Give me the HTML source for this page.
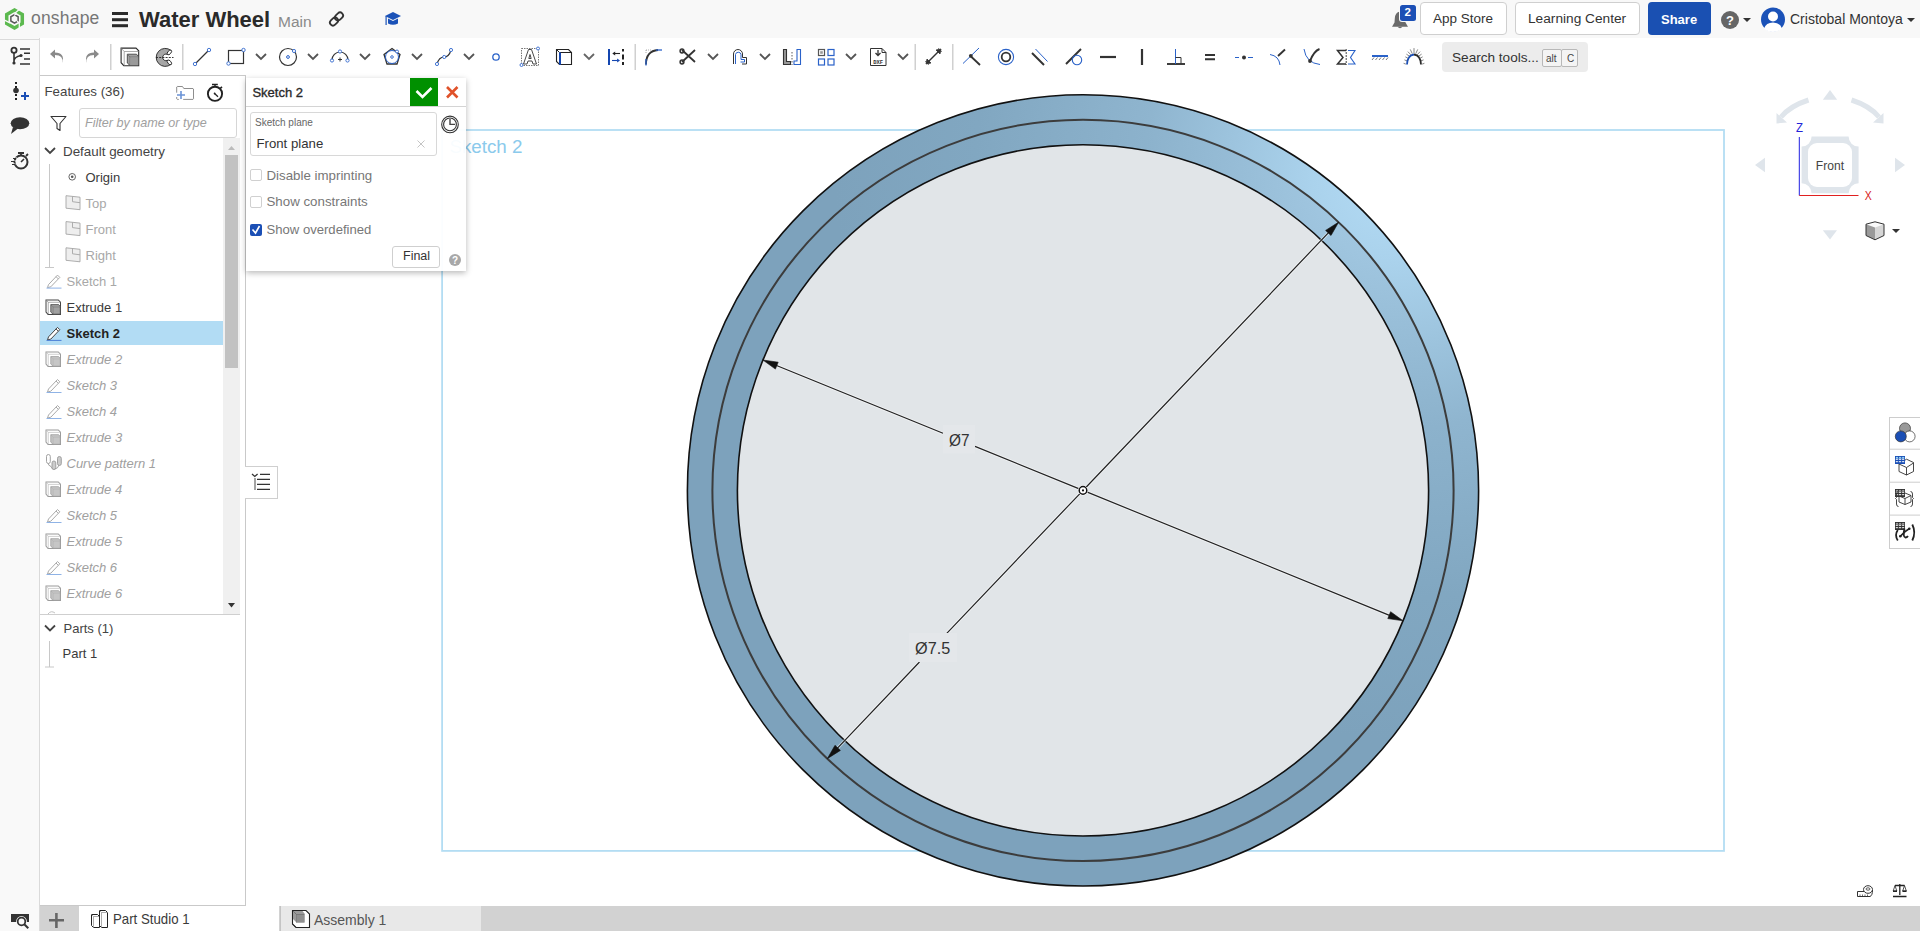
<!DOCTYPE html>
<html><head><meta charset="utf-8">
<style>
*{box-sizing:border-box;margin:0;padding:0}
html,body{width:1920px;height:931px;overflow:hidden;background:#fff;font-family:"Liberation Sans",sans-serif;color:#333;position:relative}
.abs{position:absolute}
#hdr{left:0;top:0;width:1920px;height:38px;background:#f8f8f8}
#lstrip{left:0;top:38px;width:40px;height:893px;background:#f9f9f9;border-right:1px solid #dadada}
#tabs{left:40px;top:906px;width:1880px;height:25px;background:#d2d2d2}
#fp{left:40px;top:75px;width:206px;height:831px;background:#fff;border:1px solid #c9c9c9;border-left:none}
svg{position:absolute;overflow:visible}
.t{position:absolute;white-space:nowrap;line-height:1}
</style></head>
<body>
<div id="hdr" class="abs"></div>
<div id="lstrip" class="abs"></div>
<div class="abs" style="left:0;top:39px;width:39px;height:1px;background:#dadada"></div>
<!-- canvas -->
<svg class="abs" style="left:0;top:0" width="1920" height="931" viewBox="0 0 1920 931">
  <defs>
    <radialGradient id="ringg" gradientUnits="userSpaceOnUse" cx="1395" cy="178" r="560">
      <stop offset="0" stop-color="#b4dcf5"/>
      <stop offset="0.15" stop-color="#aad2ec"/>
      <stop offset="0.45" stop-color="#8fb5cf"/>
      <stop offset="0.75" stop-color="#81a7c1"/>
      <stop offset="1" stop-color="#7da2bc"/>
    </radialGradient>
    <radialGradient id="ringg2" gradientUnits="userSpaceOnUse" cx="1395" cy="178" r="560">
      <stop offset="0" stop-color="#a6cce6"/>
      <stop offset="0.15" stop-color="#9fc5df"/>
      <stop offset="0.45" stop-color="#8cb2cc"/>
      <stop offset="0.75" stop-color="#81a7c1"/>
      <stop offset="1" stop-color="#7da2bc"/>
    </radialGradient>
  </defs>
  <rect x="442.1" y="130" width="1281.9" height="720.9" fill="none" stroke="#b3ddf3" stroke-width="1.8"/>
  <circle cx="1083" cy="490.4" r="395.6" fill="url(#ringg)" stroke="#111" stroke-width="1.6"/>
  <circle cx="1083" cy="490.4" r="370.6" fill="url(#ringg2)" stroke="#3c3c3c" stroke-width="2"/>
  <circle cx="1083" cy="490.4" r="345.6" fill="#e1e5e8" stroke="#111" stroke-width="1.6"/>

  <path d="M775.9,365.2 L943.0,433.3 M975.0,446.4 L1079.3,488.9 M1086.7,491.9 L1390.1,615.6 M837.0,748.6 L919.5,662.0 M946.5,633.6 L1080.2,493.3 M1085.8,487.5 L1329.0,232.2" stroke="#fff" stroke-opacity="0.5" stroke-width="3" fill="none"/>
  <path d="M775.9,365.2 L943.0,433.3 M975.0,446.4 L1079.3,488.9 M1086.7,491.9 L1390.1,615.6 M837.0,748.6 L919.5,662.0 M946.5,633.6 L1080.2,493.3 M1085.8,487.5 L1329.0,232.2" stroke="#222" stroke-width="1.2" fill="none"/>
  <path d="M762.9,360.0 L778.2,362.2 L775.4,369.1 Z M1403.1,620.8 L1387.8,618.6 L1390.6,611.7 Z M827.3,758.7 L835.0,745.3 L840.4,750.4 Z M1338.7,222.1 L1331.0,235.5 L1325.6,230.4 Z" fill="#111" stroke="#111" stroke-width="0.6" stroke-linejoin="round"/>
  <rect x="943" y="425" width="32" height="28.5" fill="#e4e7ea"/>
  <rect x="909" y="633" width="48" height="29" fill="#e4e7ea"/>
  <text x="949" y="446" font-family="Liberation Sans" font-size="17" fill="#333" textLength="20.5" lengthAdjust="spacingAndGlyphs">Ø7</text>
  <text x="915" y="653.8" font-family="Liberation Sans" font-size="17" fill="#333" textLength="35.2" lengthAdjust="spacingAndGlyphs">Ø7.5</text>
  <circle cx="1083" cy="490.4" r="4.6" fill="#fff" stroke="#fff" stroke-width="1"/>
  <circle cx="1083" cy="490.4" r="3.8" fill="none" stroke="#111" stroke-width="1.5"/>
  <circle cx="1083" cy="490.4" r="1.1" fill="#111"/>
</svg>

<div class="t" style="left:449.4px;top:137.7px;font-size:18.8px;color:#8bcaec">Sketch 2</div>
<!-- HEADER -->
<svg style="left:0;top:0" width="1920" height="40">
  <!-- onshape logo -->
  <path d="M14.50,9.90 L22.29,14.40 L22.29,23.40 L14.50,27.90 L6.71,23.40 L6.71,14.40 Z" fill="none" stroke="#5cb94f" stroke-width="3.5" stroke-linejoin="miter"/>
  <path d="M12.5,15.3 L19.5,9.3 M19.3,20.5 V29.5 M3.5,19.6 L10.5,23.2" stroke="#f8f8f8" stroke-width="1.3"/>
  <path d="M14.50,14.70 L18.14,16.80 L18.14,21.00 L14.50,23.10 L10.86,21.00 L10.86,16.80 Z" fill="none" stroke="#5a5a5a" stroke-width="1.5"/>
  <path d="M14.2,15.2 L17,13.5 M17,20.8 L19,23" stroke="#f8f8f8" stroke-width="1.2"/>
  <!-- hamburger -->
  <rect x="112" y="12" width="16" height="3" fill="#2b2b2b"/>
  <rect x="112" y="18.2" width="16" height="3" fill="#2b2b2b"/>
  <rect x="112" y="24.2" width="16" height="3" fill="#2b2b2b"/>
  <!-- link -->
  <g stroke="#333" stroke-width="1.8" fill="none" transform="translate(336.5,19) rotate(-45)">
    <rect x="-8" y="-3" width="9" height="6" rx="3"/>
    <rect x="-1" y="-3" width="9" height="6" rx="3"/>
  </g>
  <!-- grad cap -->
  <g fill="#1b52b8">
    <path d="M385,16 L393,12 L401,16 L393,20 Z"/>
    <path d="M388,18.5 L388,23.5 Q393,26 398,23.5 L398,18.5 L393,21 Z"/>
    <rect x="385.5" y="16" width="1.2" height="9"/>
  </g>
  <!-- bell -->
  <path d="M1400,11.5 Q1395,12.5 1394.8,18.5 L1394.5,22.5 L1392,26.8 H1408 L1405.5,22.5 L1405.2,18.5 Q1405,12.5 1400,11.5 Z" fill="#6a6a6a"/>
  <path d="M1397.5,26.8 Q1400,29.5 1402.5,26.8 Z" fill="#6a6a6a"/>
  <rect x="1399" y="4" width="18" height="18" rx="3" fill="#f8f8f8"/><rect x="1400" y="5" width="16" height="16" rx="2.5" fill="#1b4fb5"/>
  <!-- help -->
  <circle cx="1730" cy="20" r="9" fill="#666"/>
  <path d="M1743,18 L1751,18 L1747,22 Z" fill="#333"/>
  <!-- avatar -->
  <circle cx="1773" cy="19.5" r="12" fill="#1b52b8"/>
  <circle cx="1773" cy="16.5" r="5" fill="#fff"/>
  <path d="M1764,28.5 Q1766,22.5 1773,22.5 Q1780,22.5 1782,28.5 Q1778,32 1773,32 Q1768,32 1764,28.5 Z" fill="#fff"/>
  <path d="M1907,18 L1915,18 L1911,22 Z" fill="#333"/>
</svg>
<div class="t" style="left:31px;top:9.5px;font-size:17.5px;color:#767676;letter-spacing:0.2px">onshape</div>
<div class="t" style="left:139px;top:8.5px;font-size:22px;font-weight:bold;color:#2a2a2a">Water Wheel</div>
<div class="t" style="left:278px;top:14px;font-size:15.5px;color:#8a8a8a">Main</div>
<div class="t" style="left:1404.6px;top:6.8px;font-size:11.5px;font-weight:bold;color:#fff">2</div>
<div class="t" style="left:1420px;top:2px;width:87px;height:33px;border:1px solid #cfcfcf;border-radius:4px;background:#fff"></div>
<div class="t" style="left:1433px;top:12.2px;font-size:13.5px;color:#333">App Store</div>
<div class="t" style="left:1515px;top:2px;width:125px;height:33px;border:1px solid #cfcfcf;border-radius:4px;background:#fff"></div>
<div class="t" style="left:1528px;top:12px;font-size:13.7px;color:#333">Learning Center</div>
<div class="t" style="left:1648px;top:2px;width:63px;height:33px;border-radius:4px;background:#1a50b2"></div>
<div class="t" style="left:1661px;top:12.5px;font-size:13px;font-weight:bold;color:#fff">Share</div>
<div class="t" style="left:1726px;top:13.5px;font-size:13px;font-weight:bold;color:#fff">?</div>
<div class="t" style="left:1790px;top:11.7px;font-size:14px;color:#333">Cristobal Montoya</div>

<!-- TOOLBAR -->
<svg style="left:0;top:38px" width="1920" height="40" viewBox="0 38 1920 40">
 <g fill="none" stroke-linecap="butt">
  <!-- feature list icon -->
  <circle cx="14" cy="50.3" r="2.6" stroke="#333" stroke-width="1.8"/>
  <path d="M14,53 L14,62.5 M14,61 Q14,57 21,55.5" stroke="#333" stroke-width="1.6"/>
  <circle cx="14" cy="63" r="1.6" fill="#333" stroke="none"/>
  <circle cx="21" cy="55.5" r="1.6" fill="#333" stroke="none"/>
  <path d="M20,49 H30 M24,53.3 H30 M24,59 H30 M20,64 H30" stroke="#333" stroke-width="1.6"/>
  <!-- undo / redo -->
  <path d="M62.5,63 Q63.5,55 55,55 L55,58.5 L50,54 L55,49.5 L55,52.5 Q65,52.5 62.5,63 Z" fill="#8a8a8a" stroke="none"/>
  <path d="M86.5,63 Q85.5,55 94,55 L94,58.5 L99,54 L94,49.5 L94,52.5 Q84,52.5 86.5,63 Z" fill="#8a8a8a" stroke="none"/>
  <rect x="110" y="44" width="1.5" height="26" fill="#d0d0d0" stroke="none"/>
  <!-- part studio-like icon -->
  <path d="M121.1,48.1 H136 L138.7,50.8 V65.7 H123.8 L121.1,62.7 Z" stroke="#2a2a2a" stroke-width="1.1" fill="#fff"/>
  <path d="M121.1,48.1 L124.2,51.5 H138.5 M124.2,51.5 V65.5" stroke="#888" stroke-width="0.7" fill="none"/>
  <path d="M127.3,54.2 H136.5 L138.5,56.5 V65.5 H130 L127.3,63 Z" fill="#a0a0a0" stroke="#333" stroke-width="0.8"/>
  <path d="M127.3,54.2 L130,57 H138.5 M130,57 V65.5" stroke="#666" stroke-width="0.7" fill="none"/>
  <path d="M130.2,57.3 H138.3 V65.3 H130.2 Z" fill="#9a9a9a"/>
  <!-- revolve-like -->
  <path d="M171,50.5 A9,9 0 1 0 171,64.3 L167.5,60.3 A3.3,3.3 0 1 1 167.5,54.5 Z" fill="#a6a6a6" stroke="#222" stroke-width="0.9"/>
  <ellipse cx="169.4" cy="52.4" rx="1.6" ry="2.8" transform="rotate(40 169.4 52.4)" fill="#fff" stroke="#222" stroke-width="0.9"/>
  <ellipse cx="169.4" cy="62.4" rx="1.6" ry="2.8" transform="rotate(-40 169.4 62.4)" fill="#fff" stroke="#222" stroke-width="0.9"/>
  <path d="M156,57.5 H173.5" stroke="#222" stroke-width="0.9" stroke-dasharray="2 1.2"/>
  <rect x="182" y="44" width="1.5" height="26" fill="#d0d0d0" stroke="none"/>
  <!-- line -->
  <path d="M195,64 L209,50" stroke="#333" stroke-width="1.3"/>
  <circle cx="195" cy="64" r="1.7" stroke="#3b6fd0" stroke-width="0.95" fill="#fff"/>
  <circle cx="209" cy="50" r="1.7" stroke="#3b6fd0" stroke-width="0.95" fill="#fff"/>
  <!-- rectangle -->
  <rect x="228.5" y="50.5" width="15" height="13" stroke="#333" stroke-width="1.2"/>
  <circle cx="228.5" cy="63.5" r="1.7" stroke="#3b6fd0" stroke-width="0.95" fill="#fff"/>
  <circle cx="243.5" cy="50" r="1.7" stroke="#3b6fd0" stroke-width="0.95" fill="#fff"/>
  <path d="M256,54 L261,59 L266,54" stroke="#555" stroke-width="1.8" fill="none"/>
  <!-- circle -->
  <circle cx="288" cy="57" r="8.5" stroke="#333" stroke-width="1.2"/>
  <circle cx="288" cy="57" r="1.4" stroke="#2a62c9" stroke-width="1"/>
  <circle cx="294" cy="51" r="1.6" stroke="#3b6fd0" stroke-width="0.95" fill="#fff"/>
  <path d="M308,54 L313,59 L318,54" stroke="#555" stroke-width="1.8" fill="none"/>
  <!-- arc -->
  <path d="M332,60 A8,8 0 0 1 348,60" stroke="#333" stroke-width="1.2"/>
  <circle cx="332" cy="60.5" r="1.6" stroke="#3b6fd0" stroke-width="0.95" fill="#fff"/>
  <circle cx="347.5" cy="60.5" r="1.6" stroke="#3b6fd0" stroke-width="0.95" fill="#fff"/>
  <circle cx="340" cy="51.5" r="1.6" stroke="#3b6fd0" stroke-width="0.95" fill="#fff"/>
  <path d="M338,59.5 H342 M340,57.5 V61.5" stroke="#333" stroke-width="1"/>
  <path d="M360,54 L365,59 L370,54" stroke="#555" stroke-width="1.8" fill="none"/>
  <!-- polygon -->
  <path d="M392,48.5 L400,54.5 L397,64 L387,64 L384,54.5 Z" stroke="#333" stroke-width="1.3"/>
  <circle cx="392" cy="57" r="6.5" stroke="#2a62c9" stroke-width="1"/>
  <circle cx="392" cy="57" r="1.3" stroke="#2a62c9" stroke-width="0.9"/>
  <circle cx="397" cy="51.5" r="1.5" stroke="#3b6fd0" stroke-width="0.95" fill="#fff"/>
  <path d="M412,54 L417,59 L422,54" stroke="#555" stroke-width="1.8" fill="none"/>
  <!-- spline -->
  <path d="M437,64 Q439,57 444,57 Q449,57 451,50" stroke="#333" stroke-width="1.2"/>
  <circle cx="437" cy="64" r="1.6" stroke="#3b6fd0" stroke-width="0.95" fill="#fff"/>
  <circle cx="444.2" cy="57" r="1.6" stroke="#3b6fd0" stroke-width="0.95" fill="#fff"/>
  <circle cx="451" cy="50" r="1.6" stroke="#3b6fd0" stroke-width="0.95" fill="#fff"/>
  <path d="M464,54 L469,59 L474,54" stroke="#555" stroke-width="1.8" fill="none"/>
  <!-- point -->
  <circle cx="496" cy="57" r="3.2" stroke="#2a62c9" stroke-width="1.3"/>
  <!-- text A -->
  <rect x="521.5" y="48.5" width="17" height="17" stroke="#555" stroke-width="0.8" stroke-dasharray="1.5 1"/>
  <path d="M523.5,64 L528.5,49.5 L531.5,49.5 L536.5,64 L533,64 L532,61 L528,61 L527,64 Z M528.8,58.5 L531.2,58.5 L530,54.5 Z" stroke="#333" stroke-width="0.9" fill="#fff"/>
  <circle cx="521.5" cy="65" r="1.5" stroke="#3b6fd0" stroke-width="0.95" fill="#fff"/>
  <circle cx="538" cy="48.5" r="1.5" stroke="#3b6fd0" stroke-width="0.95" fill="#fff"/>
  <!-- box -->
  <path d="M556.5,49.5 H568.5 L571.5,52.5 V64.5 H559.5 L556.5,61.5 Z" stroke="#222" stroke-width="1.1" fill="none"/>
  <path d="M556.5,49.5 L559.5,52.5 H571.5" stroke="#222" stroke-width="1" fill="none"/>
  <path d="M560,52.5 V64.8" stroke="#1446b0" stroke-width="2"/>
  <path d="M584,54 L589,59 L594,54" stroke="#666" stroke-width="1.8" fill="none"/>
  <!-- mirror -->
  <path d="M609,49 V65" stroke="#1446b0" stroke-width="2"/>
  <path d="M623,49 V51.5 M623,54.5 V59.5 M623,62 V65" stroke="#222" stroke-width="2"/>
  <path d="M620,53.5 H614" stroke="#222" stroke-width="1.1"/>
  <path d="M612.3,53.5 L615.2,51.6 V55.4 Z" fill="#222"/>
  <path d="M612,60.5 H617.5" stroke="#1446b0" stroke-width="1.1"/>
  <path d="M620,60.5 L617.1,58.6 V62.4 Z" fill="#1446b0"/>
  <rect x="634.5" y="44" width="1.5" height="26" fill="#d0d0d0" stroke="none"/>
  <!-- fillet -->
  <path d="M646,64.5 Q646,51 658,50" stroke="#333" stroke-width="1.8"/>
  <path d="M646,59 V65.5" stroke="#2a62c9" stroke-width="1.3"/>
  <path d="M656,50 H662" stroke="#2a62c9" stroke-width="1.3"/>
  <path d="M646,50 H651 M646,50 V54" stroke="#777" stroke-width="0.6" stroke-dasharray="1 1"/>
  <!-- scissors -->
  <path d="M682,50 L695,62 M695,50 L682,62" stroke="#333" stroke-width="1.8"/>
  <circle cx="682" cy="51" r="1.9" stroke="#333" stroke-width="1.5"/>
  <circle cx="682" cy="62" r="1.9" stroke="#333" stroke-width="1.5"/>
  <path d="M708,54 L713,59 L718,54" stroke="#555" stroke-width="1.8" fill="none"/>
  <!-- offset -->
  <path d="M733.5,64 V54 A4.5,4.5 0 0 1 742.5,54 V57.5 H746.5 V64 H742" stroke="#333" stroke-width="1"/>
  <path d="M735.5,64 V54.5 A2.8,2.8 0 0 1 741,54.5 V59.5 H744.5 V62 H740.5" stroke="#2a62c9" stroke-width="1"/>
  <path d="M760,54 L765,59 L770,54" stroke="#555" stroke-width="1.8" fill="none"/>
  <!-- L|J -->
  <path d="M783.5,49.5 H786.5 V61.5 H790.5 V64.5 H783.5 Z" stroke="#333" stroke-width="1.1" fill="#999"/>
  <path d="M792,52 V65" stroke="#333" stroke-width="0.8" stroke-dasharray="1.5 1.5"/>
  <path d="M797,49.5 H800.5 V64.5 H794 V61 H797 Z" stroke="#2a62c9" stroke-width="1.1"/>
  <!-- grid -->
  <rect x="818.5" y="49.5" width="6" height="6" stroke="#555" stroke-width="1.2"/>
  <rect x="820.2" y="51.2" width="2.6" height="2.6" fill="#999" stroke="none"/>
  <rect x="828" y="49.5" width="6" height="6" stroke="#2a62c9" stroke-width="1.2"/>
  <rect x="818.5" y="59" width="6" height="6" stroke="#2a62c9" stroke-width="1.2"/>
  <rect x="828" y="59" width="6" height="6" stroke="#2a62c9" stroke-width="1.2"/>
  <path d="M846,54 L851,59 L856,54" stroke="#555" stroke-width="1.8" fill="none"/>
  <!-- DXF -->
  <path d="M870.5,48.5 H882 L886,52.5 V65.5 H870.5 Z M882,48.5 V52.5 H886" stroke="#333" stroke-width="1"/>
  <path d="M878,50 V55 M875.5,53 L878,55.5 L880.5,53" stroke="#333" stroke-width="1.3"/>
  <text x="878.2" y="63.6" font-family="Liberation Mono" font-size="5.5" font-weight="bold" fill="#333" text-anchor="middle">DXF</text>
  <path d="M898,54 L903,59 L908,54" stroke="#555" stroke-width="1.8" fill="none"/>
  <rect x="914.5" y="44" width="1.5" height="26" fill="#d0d0d0" stroke="none"/>
  <!-- dimension -->
  <path d="M928,62 L939,51" stroke="#333" stroke-width="1.5"/>
  <path d="M926,64 L927,59 L931,63 Z M941,49 L940,54 L936,50 Z" fill="#333" stroke="#333" stroke-width="0.8"/>
  <path d="M925,61 L929,65 M938,48 L942,52" stroke="#333" stroke-width="0.6"/>
  <rect x="952" y="44" width="1.5" height="26" fill="#d0d0d0" stroke="none"/>
  <!-- coincident -->
  <path d="M963,63.5 L979,48" stroke="#2a62c9" stroke-width="1"/>
  <path d="M970.5,56 L980,65" stroke="#333" stroke-width="1.8"/>
  <circle cx="970.8" cy="55.8" r="1.9" fill="#333" stroke="none"/>
  <!-- concentric -->
  <circle cx="1006" cy="57" r="7.6" stroke="#2a62c9" stroke-width="1.1"/>
  <circle cx="1006" cy="57" r="4.3" stroke="#333" stroke-width="1.8"/>
  <!-- parallel -->
  <path d="M1032,53 L1044,65" stroke="#333" stroke-width="1.9"/>
  <path d="M1035.5,49 L1047.5,61.5" stroke="#2a62c9" stroke-width="1"/>
  <!-- tangent -->
  <path d="M1066,64 L1081,49" stroke="#333" stroke-width="1.9"/>
  <circle cx="1077" cy="60" r="4.7" stroke="#2a62c9" stroke-width="1.1"/>
  <!-- horizontal / vertical -->
  <path d="M1100,57 H1116" stroke="#333" stroke-width="2.2"/>
  <path d="M1142,49 V65" stroke="#333" stroke-width="2.2"/>
  <!-- perpendicular -->
  <path d="M1167,64 H1185" stroke="#333" stroke-width="1.9"/>
  <path d="M1175.5,49 V64" stroke="#2a62c9" stroke-width="1"/>
  <path d="M1175.5,57.5 H1181 V64" stroke="#333" stroke-width="1"/>
  <!-- equal -->
  <path d="M1205,55 H1215 M1205,59.3 H1215" stroke="#333" stroke-width="1.9"/>
  <!-- midpoint -->
  <path d="M1235,57.5 H1239 M1248,57.5 H1253" stroke="#2a62c9" stroke-width="1.1"/>
  <circle cx="1244" cy="57.5" r="2" fill="#333" stroke="none"/>
  <!-- normal -->
  <path d="M1270,54.5 Q1279,56 1280,65" stroke="#2a62c9" stroke-width="1"/>
  <path d="M1278,56 L1285,49.5" stroke="#333" stroke-width="1.9"/>
  <!-- pierce -->
  <path d="M1304,49 Q1306,63 1320,64.5" stroke="#2a62c9" stroke-width="1"/>
  <path d="M1310,61 Q1314,51 1319.5,49" stroke="#333" stroke-width="1.9"/>
  <circle cx="1310" cy="61" r="1.9" fill="#333" stroke="none"/>
  <!-- symmetric -->
  <path d="M1346,50.5 H1337.5 L1343,57.5 L1337.5,64 H1346" stroke="#333" stroke-width="1.5"/>
  <path d="M1346.2,49 V65" stroke="#333" stroke-width="0.9" stroke-dasharray="2 1"/>
  <path d="M1348,50.5 H1355 L1350.5,57.5 L1355,64 H1348" stroke="#2a62c9" stroke-width="1.1"/>
  <!-- fix -->
  <path d="M1372,56 H1388" stroke="#2a62c9" stroke-width="2"/>
  <path d="M1372,60 L1374,57.5 M1375.5,60 L1377.5,57.5 M1379,60 L1381,57.5 M1382.5,60 L1384.5,57.5 M1386,60 L1388,57.5" stroke="#555" stroke-width="0.8"/>
  <!-- curvature -->
  <path d="M1405.87,64.10 L1403.60,63.31 M1407.06,60.98 L1404.42,59.87 M1408.27,58.39 L1405.32,56.84 M1409.52,56.31 L1406.40,54.13 M1410.84,54.74 L1407.90,51.65 M1412.32,53.69 L1410.28,49.42 M1414.00,53.30 L1414.00,48.10 M1415.68,53.69 L1417.72,49.42 M1417.16,54.74 L1420.10,51.65 M1418.48,56.31 L1421.60,54.13 M1419.73,58.39 L1422.68,56.84 M1420.94,60.98 L1423.58,59.87 M1422.13,64.10 L1424.40,63.31" stroke="#7a7a7a" stroke-width="0.9"/>
  <path d="M1407,64.5 Q1407.5,55 1414,54.5" stroke="#1b4fb5" stroke-width="1.8"/>
  <path d="M1414,54.5 Q1420.5,55 1421,64.5" stroke="#2a2a2a" stroke-width="1.8"/>
 </g>
</svg>
<div class="t" style="left:1442px;top:42px;width:146px;height:30px;background:#ececec;border-radius:4px"></div>
<div class="t" style="left:1452px;top:50.5px;font-size:13.6px;color:#333">Search tools...</div>
<div class="t" style="left:1542px;top:49px;width:20px;height:18px;border:1px solid #b8b8b8;border-radius:2px;background:#f4f4f4;font-size:10px;color:#444;padding:4px 0 0 3px">alt</div>
<div class="t" style="left:1561px;top:49px;width:17px;height:18px;border:1px solid #b8b8b8;border-radius:2px;background:#f4f4f4;font-size:10px;color:#444;padding:4px 0 0 5px">C</div>
<div id="fp" class="abs"></div>

<!-- FEATURE PANEL -->
<div class="t" style="left:40px;top:321px;width:183px;height:24px;background:#b2dcf4"></div>
<div class="t" style="left:223px;top:138px;width:17px;height:476px;background:#f0f0f0"></div>
<div class="t" style="left:225px;top:155px;width:13px;height:213px;background:#c2c2c2"></div>
<div class="t" style="left:79px;top:108px;width:158px;height:30px;border:1px solid #d6d6d6;border-radius:3px;background:#fff"></div>
<div class="t" style="left:40px;top:614px;width:200px;height:1px;background:#cfcfcf"></div>
<svg style="left:0;top:0" width="260" height="700" viewBox="0 0 260 700">
  <!-- scroll arrows -->
  <path d="M228,150 L235,150 L231.5,146 Z" fill="#bbb"/>
  <path d="M228,603 L235,603 L231.5,607.5 Z" fill="#333"/>
  <!-- folder plus -->
  <path d="M176.7,92.7 V87 L177.3,86.5 H182.5 L183.8,88.5 H193 L193.5,89 V98.8 L193,99.4 H183.2 M178.8,99.4 H177.3 L176.7,98.8 V97" stroke="#888" stroke-width="0.95" fill="none"/>
  <path d="M181,91 V99 M177,95 H185" stroke="#6b93d6" stroke-width="1.6"/>
  <!-- stopwatch -->
  <circle cx="215" cy="93.8" r="7.1" stroke="#222" stroke-width="1.9" fill="none"/>
  <path d="M212,84.5 H217.8 M215,84.5 V87" stroke="#222" stroke-width="1.4"/>
  <path d="M220.3,88.3 L222,86.8" stroke="#222" stroke-width="1.6"/>
  <path d="M214.3,93.2 L218,96.8" stroke="#222" stroke-width="1.2"/>
  <circle cx="214.6" cy="93.5" r="0.9" fill="#222"/>
  <!-- filter -->
  <path d="M51,116.5 H66 L60,123.5 V130.5 L57,128.5 V123.5 Z" stroke="#333" stroke-width="1.1" fill="none" stroke-linejoin="round"/>
  <!-- chevrons -->
  <path d="M45,148 L50,153 L55,148" stroke="#444" stroke-width="1.8" fill="none"/>
  <path d="M45,625.5 L50,630.5 L55,625.5" stroke="#444" stroke-width="1.8" fill="none"/>
  <!-- tree lines -->
  <path d="M49.5,164 V267.5 M45,267.5 H54" stroke="#c8c8c8" stroke-width="1"/>
  <path d="M49.5,641 V667 M45,667 H54" stroke="#c8c8c8" stroke-width="1"/>
  <!-- origin -->
  <circle cx="72.2" cy="176.8" r="3.3" stroke="#555" stroke-width="0.9" fill="none"/>
  <circle cx="72.2" cy="176.8" r="1.3" fill="#555"/>
  <!-- partial icon at bottom -->
  <path d="M48,614 Q51,610 55,613" stroke="#bbb" stroke-width="0.9" fill="none"/>
  <g transform="translate(46,272.6)"><path d="M2.5,12 L11.5,2.5 L13.8,4.8 L4.8,14.2 L1.5,15 Z M10,4 L12.3,6.3" stroke="#aaa" stroke-width="1" fill="#fff" stroke-linejoin="round"/><path d="M0.5,15.5 H15.5" stroke="#8fb3e6" stroke-width="1"/></g><g transform="translate(45.5,299.4) scale(0.852)"><path d="M0.6,0.6 H15 L17.6,3.2 V17.6 H3 L0.6,14.8 Z" stroke="#444" stroke-width="1.2" fill="#fff"/><path d="M0.6,0.6 L3.2,3.4 H17.4 M3.2,3.4 V17.4" stroke="#888" stroke-width="0.8" fill="none"/><path d="M6.2,6.1 H15.4 L17.4,8.4 V17.4 H8.9 L6.2,14.9 Z" fill="#a0a0a0" stroke="#444" stroke-width="0.9"/><path d="M6.2,6.1 L8.9,8.9 H17.4 M8.9,8.9 V17.4" stroke="#444" stroke-width="0.6" fill="none" opacity="0.6"/></g><g transform="translate(46,324.9)"><path d="M2.5,12 L11.5,2.5 L13.8,4.8 L4.8,14.2 L1.5,15 Z M10,4 L12.3,6.3" stroke="#444" stroke-width="1" fill="#fff" stroke-linejoin="round"/><path d="M0.5,15.5 H15.5" stroke="#4a7fd6" stroke-width="1"/></g><g transform="translate(45.5,351.4) scale(0.852)"><path d="M0.6,0.6 H15 L17.6,3.2 V17.6 H3 L0.6,14.8 Z" stroke="#9a9a9a" stroke-width="1.2" fill="#fff"/><path d="M0.6,0.6 L3.2,3.4 H17.4 M3.2,3.4 V17.4" stroke="#bbb" stroke-width="0.8" fill="none"/><path d="M6.2,6.1 H15.4 L17.4,8.4 V17.4 H8.9 L6.2,14.9 Z" fill="#c6c6c6" stroke="#9a9a9a" stroke-width="0.9"/><path d="M6.2,6.1 L8.9,8.9 H17.4 M8.9,8.9 V17.4" stroke="#9a9a9a" stroke-width="0.6" fill="none" opacity="0.6"/></g><g transform="translate(46,377)"><path d="M2.5,12 L11.5,2.5 L13.8,4.8 L4.8,14.2 L1.5,15 Z M10,4 L12.3,6.3" stroke="#aaa" stroke-width="1" fill="#fff" stroke-linejoin="round"/><path d="M0.5,15.5 H15.5" stroke="#8fb3e6" stroke-width="1"/></g><g transform="translate(46,403)"><path d="M2.5,12 L11.5,2.5 L13.8,4.8 L4.8,14.2 L1.5,15 Z M10,4 L12.3,6.3" stroke="#aaa" stroke-width="1" fill="#fff" stroke-linejoin="round"/><path d="M0.5,15.5 H15.5" stroke="#8fb3e6" stroke-width="1"/></g><g transform="translate(45.5,429.5) scale(0.852)"><path d="M0.6,0.6 H15 L17.6,3.2 V17.6 H3 L0.6,14.8 Z" stroke="#9a9a9a" stroke-width="1.2" fill="#fff"/><path d="M0.6,0.6 L3.2,3.4 H17.4 M3.2,3.4 V17.4" stroke="#bbb" stroke-width="0.8" fill="none"/><path d="M6.2,6.1 H15.4 L17.4,8.4 V17.4 H8.9 L6.2,14.9 Z" fill="#c6c6c6" stroke="#9a9a9a" stroke-width="0.9"/><path d="M6.2,6.1 L8.9,8.9 H17.4 M8.9,8.9 V17.4" stroke="#9a9a9a" stroke-width="0.6" fill="none" opacity="0.6"/></g><g transform="translate(46,450)" stroke="#999" stroke-width="0.9" fill="#fff"><path d="M2,12 Q2,16 5,16.5 Q6,20 9,19 Q12,18.5 13,15" fill="none"/><rect x="0.5" y="4.5" width="3.8" height="9" rx="1.9"/><rect x="6" y="11" width="3.8" height="8.5" rx="1.9" fill="#ccc"/><rect x="11.5" y="6.5" width="3.8" height="9" rx="1.9" fill="#ccc"/></g><g transform="translate(45.5,481.5) scale(0.852)"><path d="M0.6,0.6 H15 L17.6,3.2 V17.6 H3 L0.6,14.8 Z" stroke="#9a9a9a" stroke-width="1.2" fill="#fff"/><path d="M0.6,0.6 L3.2,3.4 H17.4 M3.2,3.4 V17.4" stroke="#bbb" stroke-width="0.8" fill="none"/><path d="M6.2,6.1 H15.4 L17.4,8.4 V17.4 H8.9 L6.2,14.9 Z" fill="#c6c6c6" stroke="#9a9a9a" stroke-width="0.9"/><path d="M6.2,6.1 L8.9,8.9 H17.4 M8.9,8.9 V17.4" stroke="#9a9a9a" stroke-width="0.6" fill="none" opacity="0.6"/></g><g transform="translate(46,507)"><path d="M2.5,12 L11.5,2.5 L13.8,4.8 L4.8,14.2 L1.5,15 Z M10,4 L12.3,6.3" stroke="#aaa" stroke-width="1" fill="#fff" stroke-linejoin="round"/><path d="M0.5,15.5 H15.5" stroke="#8fb3e6" stroke-width="1"/></g><g transform="translate(45.5,533.5) scale(0.852)"><path d="M0.6,0.6 H15 L17.6,3.2 V17.6 H3 L0.6,14.8 Z" stroke="#9a9a9a" stroke-width="1.2" fill="#fff"/><path d="M0.6,0.6 L3.2,3.4 H17.4 M3.2,3.4 V17.4" stroke="#bbb" stroke-width="0.8" fill="none"/><path d="M6.2,6.1 H15.4 L17.4,8.4 V17.4 H8.9 L6.2,14.9 Z" fill="#c6c6c6" stroke="#9a9a9a" stroke-width="0.9"/><path d="M6.2,6.1 L8.9,8.9 H17.4 M8.9,8.9 V17.4" stroke="#9a9a9a" stroke-width="0.6" fill="none" opacity="0.6"/></g><g transform="translate(46,559)"><path d="M2.5,12 L11.5,2.5 L13.8,4.8 L4.8,14.2 L1.5,15 Z M10,4 L12.3,6.3" stroke="#aaa" stroke-width="1" fill="#fff" stroke-linejoin="round"/><path d="M0.5,15.5 H15.5" stroke="#8fb3e6" stroke-width="1"/></g><g transform="translate(45.5,585.5) scale(0.852)"><path d="M0.6,0.6 H15 L17.6,3.2 V17.6 H3 L0.6,14.8 Z" stroke="#9a9a9a" stroke-width="1.2" fill="#fff"/><path d="M0.6,0.6 L3.2,3.4 H17.4 M3.2,3.4 V17.4" stroke="#bbb" stroke-width="0.8" fill="none"/><path d="M6.2,6.1 H15.4 L17.4,8.4 V17.4 H8.9 L6.2,14.9 Z" fill="#c6c6c6" stroke="#9a9a9a" stroke-width="0.9"/><path d="M6.2,6.1 L8.9,8.9 H17.4 M8.9,8.9 V17.4" stroke="#9a9a9a" stroke-width="0.6" fill="none" opacity="0.6"/></g><g transform="translate(65.5,195.2)" stroke="#a5a5a5" stroke-width="0.9" fill="#eee"><path d="M0.5,0.5 L14.5,2 L14.5,14.5 L0.5,13 Z"/><path d="M7,1.2 V6.5 L14.5,7.5" fill="none"/></g><g transform="translate(65.5,221.1)" stroke="#a5a5a5" stroke-width="0.9" fill="#eee"><path d="M0.5,0.5 L14.5,2 L14.5,14.5 L0.5,13 Z"/><path d="M7,1.2 V6.5 L14.5,7.5" fill="none"/></g><g transform="translate(65.5,247.3)" stroke="#a5a5a5" stroke-width="0.9" fill="#eee"><path d="M0.5,0.5 L14.5,2 L14.5,14.5 L0.5,13 Z"/><path d="M7,1.2 V6.5 L14.5,7.5" fill="none"/></g>
</svg>
<div class="t" style="left:44.5px;top:84.9px;font-size:13.3px;color:#444">Features (36)</div>
<div class="t" style="left:85px;top:116.7px;font-size:12.6px;color:#a0a0a0;font-style:italic">Filter by name or type</div>
<div class="t" style="left:63px;top:144.7px;font-size:13.4px;color:#444">Default geometry</div>
<div class="t" style="left:85.5px;top:171.0px;font-size:13px;color:#3a3a3a">Origin</div>
<div class="t" style="left:63.5px;top:621.7px;font-size:13px;color:#444">Parts (1)</div>
<div class="t" style="left:62.5px;top:647.3px;font-size:13px;color:#3a3a3a">Part 1</div>
<div class="t" style="left:66.5px;top:274.6px;font-size:13px;color:#a8a8a8">Sketch 1</div><div class="t" style="left:66.5px;top:300.9px;font-size:13px;color:#3a3a3a">Extrude 1</div><div class="t" style="left:66.5px;top:326.9px;font-size:13px;color:#222;font-weight:bold">Sketch 2</div><div class="t" style="left:66.5px;top:352.9px;font-size:13px;color:#a0a0a0;font-style:italic">Extrude 2</div><div class="t" style="left:66.5px;top:379.0px;font-size:13px;color:#a0a0a0;font-style:italic">Sketch 3</div><div class="t" style="left:66.5px;top:405.0px;font-size:13px;color:#a0a0a0;font-style:italic">Sketch 4</div><div class="t" style="left:66.5px;top:431.0px;font-size:13px;color:#a0a0a0;font-style:italic">Extrude 3</div><div class="t" style="left:66.5px;top:457.0px;font-size:13px;color:#a0a0a0;font-style:italic">Curve pattern 1</div><div class="t" style="left:66.5px;top:483.0px;font-size:13px;color:#a0a0a0;font-style:italic">Extrude 4</div><div class="t" style="left:66.5px;top:509.0px;font-size:13px;color:#a0a0a0;font-style:italic">Sketch 5</div><div class="t" style="left:66.5px;top:535.0px;font-size:13px;color:#a0a0a0;font-style:italic">Extrude 5</div><div class="t" style="left:66.5px;top:561.0px;font-size:13px;color:#a0a0a0;font-style:italic">Sketch 6</div><div class="t" style="left:66.5px;top:587.0px;font-size:13px;color:#a0a0a0;font-style:italic">Extrude 6</div><div class="t" style="left:85.5px;top:196.7px;font-size:13px;color:#a8a8a8">Top</div><div class="t" style="left:85.5px;top:222.6px;font-size:13px;color:#a8a8a8">Front</div><div class="t" style="left:85.5px;top:248.8px;font-size:13px;color:#a8a8a8">Right</div>
<div id="tabs" class="abs"></div>



<!-- PANEL TOGGLE TAB -->
<div class="t" style="left:245px;top:465.5px;width:33px;height:33px;background:#fff;border:1px solid #cfcfcf;border-left:none"></div>
<svg style="left:240px;top:460px" width="50" height="45" viewBox="240 460 50 45">
  <path d="M252,474 L254.8,476.5 L257.6,474" stroke="#333" stroke-width="1.3" fill="none"/>
  <path d="M260,474.4 H270 M257,479.4 H270 M257,484.4 H270 M257,489.4 H270" stroke="#333" stroke-width="1.1"/>
  <path d="M255,478 V490" stroke="#999" stroke-width="1.8"/>
</svg>
<!-- VIEW CUBE -->
<svg style="left:1740px;top:80px" width="180" height="170" viewBox="1740 80 180 170">
  <path d="M1801.6,146.6 A10,10 0 0 0 1811.6,136.6 H1848.6 A10,10 0 0 0 1858.6,146.6 V183.3 A10,10 0 0 0 1848.6,193.3 H1811.6 A10,10 0 0 0 1801.6,183.3 Z" fill="#dfe5eb"/>
  <rect x="1808" y="143" width="44" height="44" rx="9" fill="#fff"/>
  <path d="M1830,90 L1837.2,99.8 L1822.8,99.8 Z" fill="#dfe5eb"/>
  <path d="M1830,239.6 L1837,230.3 L1822.8,230.3 Z" fill="#dfe5eb"/>
  <path d="M1755,165 L1765,157.8 L1765,172.2 Z" fill="#dfe5eb"/>
  <path d="M1905,165 L1895,157.8 L1895,172.2 Z" fill="#dfe5eb"/>
  <path d="M1808.5,100 Q1790,106 1781,117" stroke="#dfe5eb" stroke-width="5" fill="none"/>
  <path d="M1776.5,113 L1776.5,123.5 L1787,122.5 Z" fill="#dfe5eb"/>
  <path d="M1851.5,100 Q1870,106 1879,117" stroke="#dfe5eb" stroke-width="5" fill="none"/>
  <path d="M1883.5,113 L1883.5,123.5 L1873,122.5 Z" fill="#dfe5eb"/>
  <path d="M1799.3,137 V195.5" stroke="#2020e0" stroke-width="1"/>
  <path d="M1799.3,195.5 H1858.5" stroke="#e02020" stroke-width="1"/>
  <text x="1796" y="132" font-family="Liberation Sans" font-size="12" fill="#2323d8" textLength="7" lengthAdjust="spacingAndGlyphs">Z</text>
  <text x="1864.8" y="200.3" font-family="Liberation Sans" font-size="12" fill="#d82323" textLength="7" lengthAdjust="spacingAndGlyphs">X</text>
  <text x="1815.8" y="170.1" font-family="Liberation Sans" font-size="13" fill="#444" textLength="28.2" lengthAdjust="spacingAndGlyphs">Front</text>
  <!-- small cube -->
  <path d="M1866,224.2 L1875,221.8 L1884,224.2 L1875,227.5 Z" fill="#fafafa"/>
  <path d="M1866,224.2 L1875,227.5 L1875,239.8 L1866,235.5 Z" fill="#9a9a9a"/>
  <path d="M1884,224.2 L1875,227.5 L1875,239.8 L1884,235.5 Z" fill="#d6d6d6"/>
  <path d="M1866,224.2 L1875,221.8 L1884,224.2 L1884,235.5 L1875,239.8 L1866,235.5 Z" stroke="#333" stroke-width="1" fill="none" stroke-linejoin="round"/>
  <path d="M1892,229 H1900 L1896,233 Z" fill="#333"/>
</svg>
<!-- RIGHT PANEL -->
<div class="t" style="left:1888.5px;top:416.5px;width:40px;height:132px;background:#fff;border:1px solid #cdcdcd;border-right:none"></div>
<svg style="left:1880px;top:410px" width="40" height="145" viewBox="1880 410 40 145">
  <path d="M1889,449.2 H1920 M1889,482.2 H1920 M1889,515.1 H1920" stroke="#cdcdcd" stroke-width="1"/>
  <circle cx="1905" cy="428.4" r="5.5" fill="#999" stroke="#333" stroke-width="0.7"/>
  <circle cx="1909.6" cy="436.4" r="5.5" fill="#fff" stroke="#333" stroke-width="0.7"/>
  <circle cx="1900.8" cy="436.4" r="5.5" fill="#1b4fb5" stroke="#333" stroke-width="0.7"/>
  <!-- icon 2 -->
  <path d="M1899,464 L1906.5,459.2 L1913.5,462.5 V471.5 L1906.5,475 L1899,471.5 Z M1899,464 L1906.5,467.5 L1913.5,463 M1906.5,467.5 V475" stroke="#333" stroke-width="0.9" fill="#fff"/>
  <rect x="1895" y="456" width="10" height="8" fill="#1b4fb5"/><rect x="1895.9" y="456.9" width="2.2" height="1.6" fill="#8fd0f5"/><rect x="1899.0" y="456.9" width="2.2" height="1.6" fill="#8fd0f5"/><rect x="1902.1" y="456.9" width="2.2" height="1.6" fill="#8fd0f5"/><path d="M1895.8,459.3 H1904.2 M1895.8,461.7 H1904.2" stroke="#fff" stroke-width="1"/><path d="M1898.4,459 V463.2 M1901.6,459 V463.2" stroke="#1b4fb5" stroke-width="0.9"/>
  <!-- icon 3 -->
  <path d="M1899,496 L1905,493 L1911,495.5 V502 L1905,504.5 L1899,502 Z M1899,496 L1905,498.5 L1911,495.5 M1905,498.5 V504.5" stroke="#333" stroke-width="0.9" fill="#fff"/>
  <rect x="1895" y="489" width="10" height="8" fill="#333"/><rect x="1895.9" y="489.9" width="2.2" height="1.6" fill="#999"/><rect x="1899.0" y="489.9" width="2.2" height="1.6" fill="#999"/><rect x="1902.1" y="489.9" width="2.2" height="1.6" fill="#999"/><path d="M1895.8,492.3 H1904.2 M1895.8,494.7 H1904.2" stroke="#fff" stroke-width="1"/><path d="M1898.4,492 V496.2 M1901.6,492 V496.2" stroke="#333" stroke-width="0.9"/>
  <path d="M1898.5,491.5 Q1896.5,491.5 1896.5,494 V497.5 L1895.5,498.5 L1896.5,499.5 V504 Q1896.5,506.5 1898.5,506.5 M1910.5,491.5 Q1912.5,491.5 1912.5,494 V497.5 L1913.5,498.5 L1912.5,499.5 V504 Q1912.5,506.5 1910.5,506.5" stroke="#333" stroke-width="0.9" fill="none"/>
  <!-- icon 4 -->
  <rect x="1895" y="522" width="10" height="8" fill="#333"/><rect x="1895.9" y="522.9" width="2.2" height="1.6" fill="#999"/><rect x="1899.0" y="522.9" width="2.2" height="1.6" fill="#999"/><rect x="1902.1" y="522.9" width="2.2" height="1.6" fill="#999"/><path d="M1895.8,525.3 H1904.2 M1895.8,527.7 H1904.2" stroke="#fff" stroke-width="1"/><path d="M1898.4,525 V529.2 M1901.6,525 V529.2" stroke="#333" stroke-width="0.9"/>
  <path d="M1897.8,530 Q1894.3,535 1897.8,540.5" stroke="#222" stroke-width="1.8" fill="none"/>
  <path d="M1912.3,524.5 Q1916.2,532.5 1912.3,540.5" stroke="#222" stroke-width="1.8" fill="none"/>
  <path d="M1904.5,528.5 Q1902.5,537 1905.5,537.5 Q1907,537.5 1908,536" stroke="#222" stroke-width="1.8" fill="none"/>
  <path d="M1900,536.5 Q1905,531 1909.5,528.5" stroke="#222" stroke-width="1.6" fill="none"/>
  <circle cx="1900.3" cy="536.3" r="1.3" fill="#222"/>
  <circle cx="1909.3" cy="528.8" r="1.3" fill="#222"/>
</svg>
<!-- BOTTOM RIGHT ICONS -->
<svg style="left:1850px;top:878px" width="70" height="25" viewBox="1850 878 70 25">
  <ellipse cx="1868" cy="889.5" rx="4.5" ry="3.8" stroke="#333" stroke-width="1" fill="#fff"/>
  <ellipse cx="1868" cy="889" rx="2" ry="1.2" stroke="#333" stroke-width="0.8" fill="none"/>
  <path d="M1857.5,891.5 H1864 M1857.5,891.5 V896.5 H1870 Q1872.5,895.5 1872.5,890" stroke="#333" stroke-width="1" fill="none"/>
  <path d="M1860,896 V894.5 M1862.5,896 V894.5 M1865,896 V894.5 M1867.5,896 V894.5" stroke="#333" stroke-width="0.7"/>
  <path d="M1899.8,884 V895 M1895,885.5 H1904.5 M1893,896.5 H1906.5" stroke="#222" stroke-width="1.3"/>
  <path d="M1895,885.5 L1893.2,891 H1896.8 Z M1904.5,885.5 L1902.7,891 H1906.3 Z" stroke="#222" stroke-width="0.8" fill="none"/>
  <path d="M1893,891.2 H1897 M1902.5,891.2 H1906.5" stroke="#222" stroke-width="1.5"/>
</svg>
<!-- SKETCH DIALOG -->
<div class="t" style="left:246px;top:78px;width:220px;height:193px;background:rgba(255,255,255,0.94);box-shadow:0 2px 6px rgba(0,0,0,0.28)"></div>
<div class="t" style="left:246px;top:106px;width:220px;height:1px;background:#d4d4d4"></div>
<div class="t" style="left:410px;top:78px;width:28px;height:28px;background:#009000"></div>
<div class="t" style="left:249.5px;top:112px;width:187px;height:44px;border:1px solid #d8d8d8;border-radius:3px;background:#fff"></div>
<div class="t" style="left:391.5px;top:246px;width:48.5px;height:21.5px;border:1px solid #cfcfcf;border-radius:3px;background:#fff"></div>
<div class="t" style="left:250px;top:169.3px;width:12px;height:12px;border:1px solid #d0d0d0;border-radius:2px;background:#fff"></div>
<div class="t" style="left:250px;top:196px;width:12px;height:12px;border:1px solid #d0d0d0;border-radius:2px;background:#fff"></div>
<div class="t" style="left:250px;top:223.5px;width:12px;height:12px;border-radius:2px;background:#1b4fb5"></div>
<svg style="left:240px;top:70px" width="240" height="210" viewBox="240 70 240 210">
  <path d="M416.5,91 L422.5,97 L431.5,88" stroke="#fff" stroke-width="2.6" fill="none"/>
  <path d="M447,87 L457.5,97.5 M457.5,87 L447,97.5" stroke="#e0522a" stroke-width="2.6"/>
  <path d="M417.5,140.5 L424.5,147.5 M424.5,140.5 L417.5,147.5" stroke="#c4c4c4" stroke-width="1"/>
  <circle cx="450" cy="124.4" r="8.3" stroke="#333" stroke-width="1.1" fill="none"/>
  <circle cx="450" cy="124.4" r="6.4" stroke="#333" stroke-width="1.1" fill="none"/>
  <path d="M450,119 V124.4 H455" stroke="#444" stroke-width="1.4" fill="none"/>
  <path d="M252.5,229.5 L255.5,233 L259.5,226" stroke="#fff" stroke-width="1.6" fill="none"/>
  <circle cx="455" cy="260" r="6" fill="#a8a8a8"/>
  <text x="455" y="263.8" font-family="Liberation Sans" font-size="10" font-weight="bold" fill="#fff" text-anchor="middle">?</text>
</svg>
<div class="t" style="left:252.4px;top:85.6px;font-size:13px;color:#2a2a2a;-webkit-text-stroke:0.35px #2a2a2a">Sketch 2</div>
<div class="t" style="left:255px;top:118.4px;font-size:10px;color:#666">Sketch plane</div>
<div class="t" style="left:256.5px;top:136.7px;font-size:13.2px;color:#333">Front plane</div>
<div class="t" style="left:266.5px;top:168.7px;font-size:13.3px;color:#777">Disable imprinting</div>
<div class="t" style="left:266.5px;top:195.3px;font-size:13.3px;color:#777">Show constraints</div>
<div class="t" style="left:266.5px;top:223.4px;font-size:13.1px;color:#777">Show overdefined</div>
<div class="t" style="left:403px;top:249.9px;font-size:12.5px;color:#333">Final</div>
<!-- LEFT STRIP ICONS -->

<svg style="left:0;top:0" width="40" height="931" viewBox="0 0 40 931">
  <path d="M16,82 V100" stroke="#222" stroke-width="2" stroke-dasharray="2 2"/>
  <circle cx="16" cy="90.5" r="2.8" fill="#333"/>
  <path d="M21,96 H29 M25,92 V100" stroke="#1b4fb5" stroke-width="2"/>
  <ellipse cx="20" cy="123.3" rx="9.3" ry="6" fill="#333"/>
  <path d="M13,127 L11,134 L18,128.5 Z" fill="#333"/>
  <circle cx="21" cy="162" r="6.5" stroke="#333" stroke-width="2" fill="none"/>
  <path d="M18,153 H24 M21,153 V155.5 M26,156 L28,154" stroke="#333" stroke-width="1.8"/>
  <path d="M21,162 L24,159" stroke="#333" stroke-width="1.6"/>
  <path d="M11,161 H16 M12,164 H15.5 M13.5,158 H17" stroke="#f7f7f7" stroke-width="1.2"/>
  <path d="M11,161.5 H15 M12,164.5 H15 M13,158.5 H16" stroke="#333" stroke-width="1"/>
  <!-- search icon bottom -->
  <rect x="11" y="914" width="18" height="8" fill="#333"/>
  <circle cx="21.5" cy="921.5" r="5.4" fill="#f9f9f9"/>
  <circle cx="21.5" cy="921.5" r="3.8" stroke="#333" stroke-width="1.8" fill="#f9f9f9"/>
  <path d="M24.3,924.3 L28.3,928.3" stroke="#333" stroke-width="2"/>
</svg>
<!-- BOTTOM TABS -->
<div class="t" style="left:79px;top:906px;width:200px;height:25px;background:#fff"></div>
<div class="t" style="left:280px;top:906px;width:201px;height:25px;background:#e8e8e8;border-left:1px solid #c4c4c4"></div>
<svg style="left:0;top:880px" width="500" height="51" viewBox="0 880 500 51">
  <path d="M49,920.3 H64 M56.4,913 V928" stroke="#666" stroke-width="2.6"/>
  <!-- part studio icon -->
  <path d="M91.5,914.5 H97.5 L99.5,916.5 V927.5 H93.5 L91.5,925.5 Z" stroke="#222" stroke-width="1" fill="#fff"/>
  <path d="M91.5,914.5 L93.5,916.5 H99.5 M93.5,916.5 V927.5" stroke="#999" stroke-width="0.8" fill="none"/>
  <path d="M99.5,910.5 H105.5 L107.5,912.5 V927.5 H101.5 L99.5,925.5 Z" stroke="#222" stroke-width="1" fill="#fff"/>
  <path d="M99.5,910.5 L101.5,912.5 H107.5 M101.5,912.5 V927.5" stroke="#999" stroke-width="0.8" fill="none"/>
  <!-- assembly icon -->
  <path d="M292.5,910.5 H306 L309.5,914 V927.5 H296 L292.5,924 Z" stroke="#222" stroke-width="1.1" fill="#fff"/>
  <path d="M293,911 H302.5 L304.5,913.5 V922.5 H296.5 L293,919 Z" fill="#9a9a9a"/>
  <path d="M293,911 L296.5,914.5 H304.5 M296.5,914.5 V922.5" stroke="#666" stroke-width="0.7" fill="none"/>
  <path d="M296.5,914.8 H304.5 V922.5 H296.5 Z" fill="#8f8f8f"/>
  <path d="M292.5,924 L296,927.5" stroke="#222" stroke-width="0.8"/>
</svg>
<div class="t" style="left:112.8px;top:911.6px;font-size:14.8px;color:#3a3a3a;transform:scaleX(0.895);transform-origin:0 0">Part Studio 1</div>
<div class="t" style="left:314px;top:912.6px;font-size:14px;color:#555">Assembly 1</div>
</body></html>
